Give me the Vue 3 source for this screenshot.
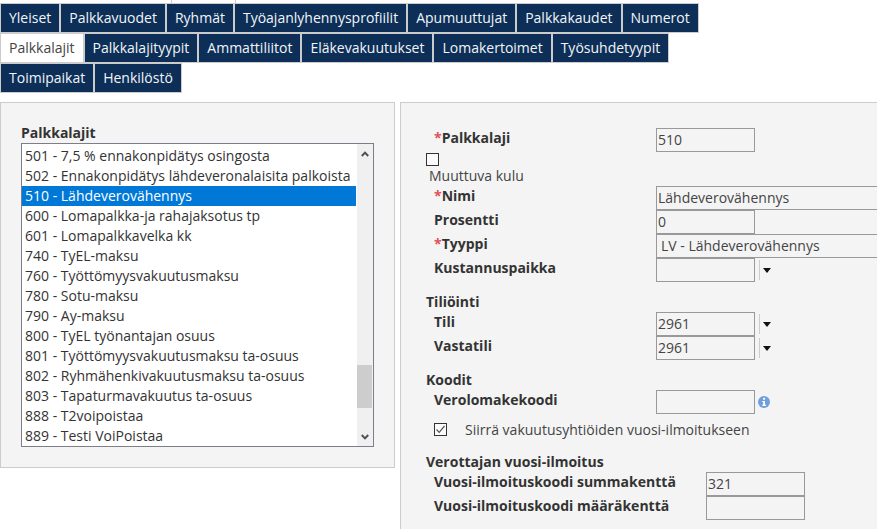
<script setup>
const row1 = ['Yleiset','Palkkavuodet','Ryhmät','Työajanlyhennysprofiilit','Apumuuttujat','Palkkakaudet','Numerot']
const row2 = ['Palkkalajit','Palkkalajityypit','Ammattiliitot','Eläkevakuutukset','Lomakertoimet','Työsuhdetyypit']
const row3 = ['Toimipaikat','Henkilöstö']
const rows = [row1, row2, row3]
const items = ['501 - 7,5 % ennakonpidätys osingosta','502 - Ennakonpidätys lähdeveronalaisita palkoista','510 - Lähdeverovähennys','600 - Lomapalkka-ja rahajaksotus tp','601 - Lomapalkkavelka kk','740 - TyEL-maksu','760 - Työttömyysvakuutusmaksu','780 - Sotu-maksu','790 - Ay-maksu','800 - TyEL työnantajan osuus','801 - Työttömyysvakuutusmaksu ta-osuus','802 - Ryhmähenkivakuutusmaksu ta-osuus','803 - Tapaturmavakuutus ta-osuus','888 - T2voipoistaa','889 - Testi VoiPoistaa']
</script>

<template>
  <div class="page">
    <div class="stubs"><span class="stub s1"></span><span class="stub s2"></span></div>
    <div v-for="(r, i) in rows" :key="i" class="tabrow">
      <div v-for="t in r" :key="t" class="tab" :class="{ active: t === 'Palkkalajit' }">{{ t }}</div>
    </div>
    <div class="panels">
      <section class="left">
        <div class="listlabel">Palkkalajit</div>
        <div class="listbox">
          <div class="opts">
            <div v-for="it in items" :key="it" class="opt" :class="{ sel: it.startsWith('510') }">{{ it }}</div>
          </div>
          <div class="sb">
            <svg class="sbarrow up" width="8" height="6" viewBox="0 0 8 6"><path d="M0.8 5 L4 1.6 L7.2 5" fill="none" stroke="#505050" stroke-width="2"/></svg>
            <div class="thumb"></div>
            <svg class="sbarrow down" width="8" height="6" viewBox="0 0 8 6"><path d="M0.8 1 L4 4.4 L7.2 1" fill="none" stroke="#505050" stroke-width="2"/></svg>
          </div>
        </div>
      </section>
      <section class="right">
        <div class="frow">
          <label class="flabel"><i>*</i>Palkkalaji</label>
          <div class="inp">510</div>
        </div>
        <div class="cb c1"></div>
        <div class="muut">Muuttuva kulu</div>
        <div class="frow">
          <label class="flabel"><i>*</i>Nimi</label>
          <div class="inp wide">Lähdeverovähennys</div>
        </div>
        <div class="frow">
          <label class="flabel">Prosentti</label>
          <div class="inp">0</div>
        </div>
        <div class="frow">
          <label class="flabel"><i>*</i>Tyyppi</label>
          <div class="inp wide sel2">LV - Lähdeverovähennys</div>
        </div>
        <div class="frow">
          <label class="flabel">Kustannuspaikka</label>
          <div class="inp"></div>
          <span class="dd"></span>
        </div>
        <h4 class="hd h-tili">Tiliöinti</h4>
        <div class="frow">
          <label class="flabel">Tili</label>
          <div class="inp">2961</div>
          <span class="dd"></span>
        </div>
        <div class="frow">
          <label class="flabel">Vastatili</label>
          <div class="inp">2961</div>
          <span class="dd"></span>
        </div>
        <h4 class="hd h-kood">Koodit</h4>
        <div class="frow">
          <label class="flabel">Verolomakekoodi</label>
          <div class="inp"></div>
          <svg class="info" width="12" height="12" viewBox="0 0 13 13">
            <circle cx="6.5" cy="6.5" r="6.5" fill="#6f9fdc"/>
            <rect x="5.5" y="2" width="2.2" height="2" fill="#fff"/>
            <path d="M4.6 5.3 H7.6 V9.6 H8.6 V10.8 H4.6 V9.6 H5.6 V6.5 H4.6 Z" fill="#fff"/>
          </svg>
        </div>
        <div class="checkrow">
          <div class="cb c2">
            <svg width="11" height="11" viewBox="0 0 11 11"><path d="M1.5 5.5 L4.2 8.3 L9.5 2" fill="none" stroke="#555" stroke-width="1.2"/></svg>
          </div>
          <span>Siirrä vakuutusyhtiöiden vuosi-ilmoitukseen</span>
        </div>
        <h4 class="hd h-ver">Verottajan vuosi-ilmoitus</h4>
        <div class="frow">
          <label class="flabel long">Vuosi-ilmoituskoodi summakenttä</label>
          <div class="inp">321</div>
        </div>
        <div class="frow">
          <label class="flabel long">Vuosi-ilmoituskoodi määräkenttä</label>
          <div class="inp"></div>
        </div>
      </section>
    </div>
  </div>
</template>

<style>
html, body { margin: 0; background: #fff; overflow: hidden; }
</style>

<style scoped>
.page {
  width: 877px;
  height: 529px;
  overflow: hidden;
  font-family: "Open Sans", sans-serif;
  font-size: 14px;
  color: #333;
}
.stubs { height: 3px; display: flex; }
.stub { display: block; height: 3px; border-right: 1px solid #ccc; box-sizing: border-box; }
.s1 { width: 172px; }
.s2 { width: 64px; }
.tabrow { display: flex; height: 30px; }
.tab {
  box-sizing: border-box;
  height: 30px;
  line-height: 28px;
  padding: 0 8px;
  border: 1px solid #ccc;
  background: #0d2f57;
  color: #f2f5f8;
  white-space: nowrap;
}
.tab.active { background: #fff; color: #444; border-right-color: #ccc; }
.panels { display: flex; margin-top: 9px; align-items: flex-start; }
.left {
  box-sizing: border-box;
  width: 395px;
  height: 366px;
  flex: none;
  padding: 20px 20px 0;
  background: #f4f4f4;
  border: 1px solid #ccc;
}
.listlabel { font-weight: 700; line-height: 19px; margin-bottom: 1px; }
.listbox {
  box-sizing: border-box;
  width: 353px;
  height: 304px;
  border: 1px solid #7e7e8a;
  background: #fff;
  display: flex;
  overflow: hidden;
}
.opts { flex: 1; padding-top: 2px; overflow: hidden; }
.opt { height: 20px; line-height: 20px; padding-left: 3px; margin-right: 1px; white-space: nowrap; }
.opt.sel { background: #0078d7; color: #fff; }
.sb { width: 16px; flex: none; background: #f0f0f0; position: relative; }
.sbarrow { position: absolute; left: 4px; }
.up { top: 7px; }
.down { bottom: 6px; }
.thumb { position: absolute; left: 0; right: 1px; top: 221px; height: 43px; background: #cdcdcd; }
.right {
  box-sizing: border-box;
  flex: 1;
  margin-left: 5px;
  height: 428px;
  background: #f4f4f4;
  border-left: 1px solid #ccc;
  border-top: 1px solid #ccc;
  padding: 25px 0 0 25px;
  overflow: hidden;
}
.frow { display: flex; height: 24px; align-items: flex-start; }
.flabel {
  box-sizing: border-box;
  width: 230px;
  flex: none;
  padding-left: 8px;
  font-weight: 700;
  line-height: 20px;
}
.flabel.long { width: 280px; }
.flabel i { font-style: normal; color: #e0505a; }
.inp {
  box-sizing: border-box;
  width: 99px;
  height: 24px;
  flex: none;
  border: 1px solid #999;
  line-height: 22px;
  padding-left: 1px;
  color: #444;
  background: #f4f4f4;
}
.inp.wide { width: 300px; border-right: 0; }
.inp.sel2 { padding-left: 4px; }
.dd {
  flex: none;
  position: relative;
  margin-left: 4px;
  width: 1px;
  height: 20px;
  margin-top: 2px;
  background: #ccc;
}
.dd::after {
  content: "";
  position: absolute;
  left: 4px;
  top: 8px;
  border-left: 4.5px solid transparent;
  border-right: 4.5px solid transparent;
  border-top: 5px solid #111;
}
.info { margin: 6px 0 0 3px; flex: none; }
.cb {
  box-sizing: border-box;
  width: 13px;
  height: 13px;
  border: 1px solid #333;
  background: #fbfbfb;
  display: flex;
  align-items: center;
  justify-content: center;
}
.c1 { margin-top: 1px; }
.muut { margin: 0 0 0 3px; height: 20px; line-height: 19px; color: #444; }
.hd { margin: 0; font-size: 14px; font-weight: 700; line-height: 20px; }
.h-tili { margin-top: 10px; margin-bottom: 0; }
.h-kood { margin-top: 10px; }
.h-ver { margin-top: 13px; }
.checkrow {
  display: flex;
  align-items: center;
  height: 20px;
  margin-top: 5px;
  padding-left: 8px;
  color: #444;
}
.checkrow span { margin-left: 18px; }
</style>
